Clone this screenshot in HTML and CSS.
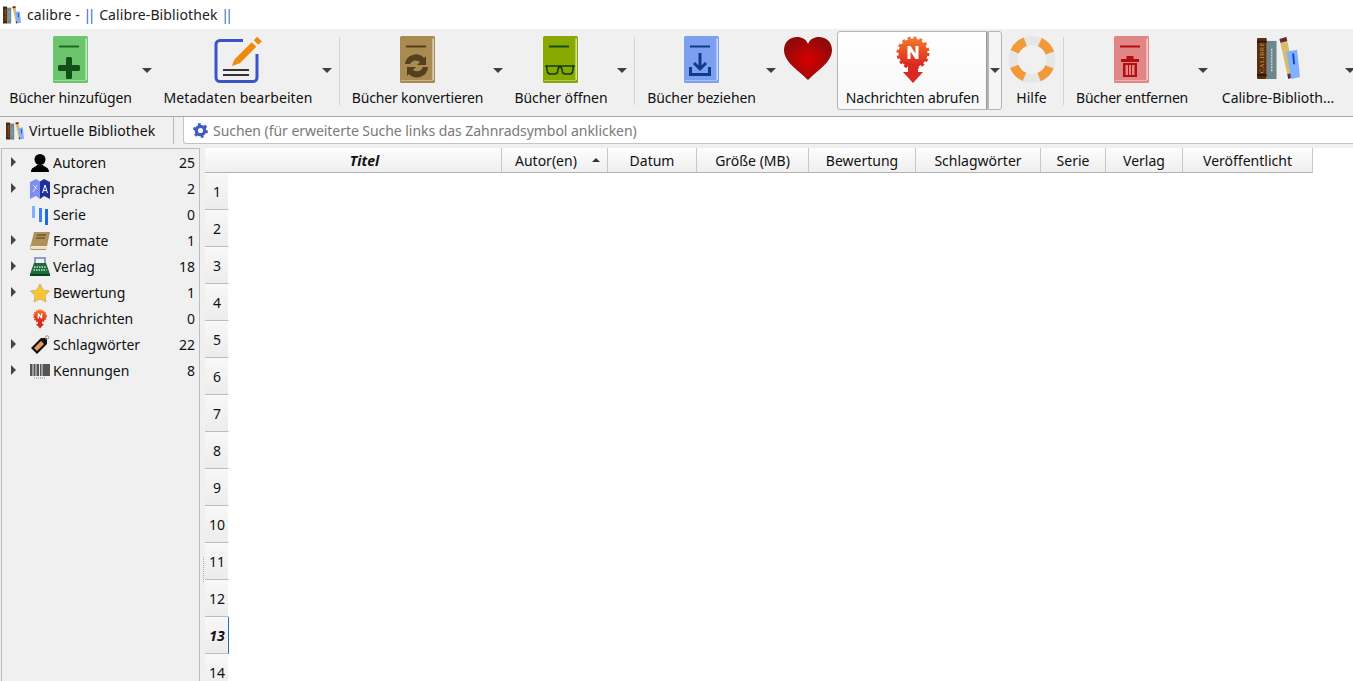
FILE: index.html
```html
<!DOCTYPE html>
<html lang="de">
<head>
<meta charset="utf-8">
<title>calibre</title>
<link rel="stylesheet" href="styles.css">
</head>
<body>
<svg class="defs" width="0" height="0" aria-hidden="true">
  <defs>
    <symbol id="book" viewBox="0 0 35 47">
      <rect x="0" y="0" width="35" height="47" rx="1.5" fill="var(--c)"/>
      <path d="M32.500 2.500H33.800V44H32.500Z" fill="#fff" opacity=".75"/>
      <path d="M1 44.500H33" stroke="#fff" stroke-width="1" opacity=".35"/>
      <rect x="6" y="9.500" width="20" height="2" fill="var(--d)"/>
    </symbol>
    <symbol id="shelf" viewBox="0 0 44 44">
      <rect x="0" y="1" width="10" height="42" rx="1" fill="#5b2e12"/>
      <rect x="0" y="4" width="10" height="2" fill="#2f1507"/>
      <rect x="0" y="38" width="10" height="2" fill="#2f1507"/>
      <text class="spine" transform="translate(7.500 37) rotate(-90)">CALIBRE</text>
      <rect x="10" y="4" width="10" height="39" fill="#6d878b"/>
      <path d="M15 12V36" stroke="#c9d4d6" stroke-width="1.500" stroke-dasharray="2 1"/>
      <path d="M23 2 30 0 39 40 32 43Z" fill="#d9bb6e"/>
      <path d="M23 2 30 0 31 4 24 6ZM31 38 38 36 39 40 32 43Z" fill="#5e2b3a"/>
      <path d="M30 15 41 13 44 41 35 43Z" fill="#7fb1ff"/>
      <path d="M36 17 38 17 39 28 37 28Z" fill="#1f3fc4"/>
    </symbol>
    <linearGradient id="ng" x1="0" y1="0" x2="0" y2="1">
      <stop offset="0" stop-color="#f0782a"/>
      <stop offset="1" stop-color="#d92020"/>
    </linearGradient>
    <symbol id="newsbadge" viewBox="0 0 36 48">
      <circle cx="18" cy="17" r="15" fill="none" stroke="url(#ng)" stroke-width="3" stroke-dasharray="3 2.900"/>
      <circle cx="18" cy="17" r="14.500" fill="url(#ng)"/>
      <path d="M13 28H23V36H28L18 47 8 36H13Z" fill="#d92a22"/>
    </symbol>
  </defs>
</svg>

<header class="titlebar">
  <svg class="win-icon" viewBox="0 0 44 44"><use href="#shelf"/></svg>
  <span>calibre - <b class="pipe">||</b> Calibre-Bibliothek <b class="pipe">||</b></span>
</header>

<nav class="toolbar">
  <div class="tool tool-add">
    <div class="main">
      <svg class="icon-book ic-green" viewBox="0 0 35 47"><use href="#book"/><path d="M13 22.500a1.500 1.500 0 0 1 1.500-1.500h3a1.500 1.500 0 0 1 1.500 1.500V29h6.500a1.500 1.500 0 0 1 1.500 1.500v3a1.500 1.500 0 0 1-1.500 1.500H19v6.500a1.500 1.500 0 0 1-1.500 1.500h-3a1.500 1.500 0 0 1-1.500-1.500V35H6.500a1.500 1.500 0 0 1-1.500-1.500v-3A1.500 1.500 0 0 1 6.500 29H13Z" fill="#12501a"/></svg>
      <span class="label">Bücher hinzufügen</span>
    </div>
    <i class="arrow"></i>
  </div>
  <div class="tool tool-meta">
    <div class="main">
      <svg class="icon-wide" viewBox="0 0 48 47">
        <path d="M29 4.500H6a4 4 0 0 0-4 4v33a4 4 0 0 0 4 4h33a4 4 0 0 0 4-4V18" fill="none" stroke="#3c55c6" stroke-width="3"/>
        <path d="M18 30 20.500 23 25 27.500Z" fill="#ef8a0c"/>
        <path d="M23 25.500 40 8.500M42 6.500 45.500 3" fill="none" stroke="#ef8a0c" stroke-width="6.500"/>
        <path d="M9 34H35M9 39H35" stroke="#333" stroke-width="1.800"/>
      </svg>
      <span class="label">Metadaten bearbeiten</span>
    </div>
    <i class="arrow"></i>
  </div>
  <i class="sep sep-a"></i>
  <div class="tool tool-conv">
    <div class="main">
      <svg class="icon-book ic-brown" viewBox="0 0 35 47"><use href="#book"/>
        <path d="M5 28a11 11 0 0 1 19-6l2-2v9h-9l3-3a6.500 6.500 0 0 0-10 2ZM28 31a11 11 0 0 1-19 7l-2 2v-9h9l-3 3a6.500 6.500 0 0 0 10-3Z" fill="#54401f"/>
      </svg>
      <span class="label">Bücher konvertieren</span>
    </div>
    <i class="arrow"></i>
  </div>
  <div class="tool tool-open">
    <div class="main">
      <svg class="icon-book ic-olive" viewBox="0 0 35 47"><use href="#book"/>
        <path d="M2 30H32M3.500 30 4.500 36Q5 38 8 38H11Q14 38 14.500 36L15.500 31.500H18.500L19.500 36Q20 38 23 38H26Q29 38 29.500 36L30.500 30" fill="none" stroke="#173b12" stroke-width="1.600"/>
      </svg>
      <span class="label">Bücher öffnen</span>
    </div>
    <i class="arrow"></i>
  </div>
  <i class="sep sep-b"></i>
  <div class="tool tool-get">
    <div class="main">
      <svg class="icon-book ic-blue" viewBox="0 0 35 47"><use href="#book"/>
        <path d="M16 17V33M10 27l6 6 6-6" fill="none" stroke="#0f3b8c" stroke-width="3"/>
        <path d="M6.500 31V38.500H25.500V31" fill="none" stroke="#0f3b8c" stroke-width="3"/>
      </svg>
      <span class="label">Bücher beziehen</span>
    </div>
    <i class="arrow"></i>
  </div>
  <div class="tool tool-heart">
    <div class="main">
      <svg class="icon-heart" viewBox="0 0 48 44">
        <defs>
          <radialGradient id="hg" cx="50%" cy="55%" r="55%">
            <stop offset="0" stop-color="#d80000"/>
            <stop offset="1" stop-color="#8f0a0a"/>
          </radialGradient>
        </defs>
        <path d="M24 43C14 33 0 25 0 13 0 5 6 0 13 0c5 0 9 2 11 7 2-5 6-7 11-7 7 0 13 5 13 13 0 12-14 20-24 30Z" fill="url(#hg)"/>
      </svg>
    </div>
  </div>
  <div class="tool tool-news">
    <div class="main news-box">
      <svg class="icon-news" viewBox="0 0 36 48"><use href="#newsbadge"/><path d="M12.500 23V10H15.500L20.500 17.500V10H23.500V23H20.500L15.500 15.500V23Z" fill="#fff"/></svg>
      <span class="label">Nachrichten abrufen</span>
    </div>
    <div class="news-arrow"><i class="arrow"></i></div>
  </div>
  <div class="tool tool-help">
    <div class="main">
      <svg class="icon-wide" viewBox="0 0 48 47">
        <circle cx="24" cy="23.500" r="19" fill="none" stroke="#e6e6e6" stroke-width="9"/>
        <circle cx="24" cy="23.500" r="19" fill="none" stroke="#f29a3a" stroke-width="9" stroke-dasharray="14.900 14.940" stroke-dashoffset="22.300"/>
      </svg>
      <span class="label">Hilfe</span>
    </div>
  </div>
  <i class="sep sep-c"></i>
  <div class="tool tool-del">
    <div class="main">
      <svg class="icon-book ic-red" viewBox="0 0 35 47"><use href="#book"/>
        <path d="M7 23H25V26H7ZM12.500 20H19.500V23H12.500ZM9 27H23V41H9ZM11.500 29V39H14V29ZM15 29V39H17V29ZM18 29V39H20.500V29Z" fill="#b30d0d" fill-rule="evenodd"/>
      </svg>
      <span class="label">Bücher entfernen</span>
    </div>
    <i class="arrow"></i>
  </div>
  <div class="tool tool-lib">
    <div class="main">
      <svg class="icon-shelf" viewBox="0 0 44 44"><use href="#shelf"/></svg>
      <span class="label">Calibre-Biblioth...</span>
    </div>
    <i class="arrow"></i>
  </div>
</nav>

<section class="searchbar">
  <div class="vlib">
    <svg class="vlib-icon" viewBox="0 0 44 44"><use href="#shelf"/></svg>
    <span>Virtuelle Bibliothek</span>
  </div>
  <i class="search-sep"></i>
  <div class="search">
    <svg class="gear" viewBox="0 0 16 16">
      <circle cx="8" cy="8" r="4.500" fill="none" stroke="#3f5bc4" stroke-width="3.500"/>
      <circle cx="8" cy="8" r="6.500" fill="none" stroke="#3f5bc4" stroke-width="3" stroke-dasharray="2.800 4"/>
    </svg>
    <span>Suchen (für erweiterte Suche links das Zahnradsymbol anklicken)</span>
  </div>
</section>

<main class="content">
  <aside class="tags">
    <div class="tag"><i class="tri"></i>
      <svg class="tag-icon" viewBox="0 0 20 20"><circle cx="10" cy="6.500" r="5.500" fill="#000"/><path d="M1 19c0-5 5-5 6-7h6c1 2 6 2 6 7Z" fill="#000"/></svg>
      <span class="tag-name">Autoren</span><span class="tag-count">25</span></div>
    <div class="tag"><i class="tri"></i>
      <svg class="tag-icon" viewBox="0 0 20 20"><path d="M0 3 6 0 10 2.500V20L6 17 0 20Z" fill="#7f8ff0"/><path d="M10 2.500 14 0 20 3V20L14 17 10 20Z" fill="#1f2f9c"/><path d="M12.500 14 15 6 17.500 14M13.500 11.500H16.500" stroke="#fff" fill="none"/><path d="M3 6 7 10M7 6 3 13" stroke="#fff" fill="none" opacity=".7"/></svg>
      <span class="tag-name">Sprachen</span><span class="tag-count">2</span></div>
    <div class="tag"><i class="tri tri-none"></i>
      <svg class="tag-icon" viewBox="0 0 20 20"><rect x="2" y="1" width="3" height="12" fill="#7fb1ff"/><rect x="9" y="3" width="3" height="14" fill="#3a80ee"/><rect x="15" y="4" width="3" height="16" fill="#1a6ae0"/></svg>
      <span class="tag-name">Serie</span><span class="tag-count">0</span></div>
    <div class="tag"><i class="tri"></i>
      <svg class="tag-icon" viewBox="0 0 20 20"><path d="M4 1H20L17 15H2C0 15 0 18 2 18H16V19H2C-1 19 0 15 1 13Z" fill="#b0915a"/><path d="M2 15.500H16.500V18H2Z" fill="#eadfc8"/><path d="M7 4H16M6 7H15" stroke="#6e5a35" stroke-width="1.300"/></svg>
      <span class="tag-name">Formate</span><span class="tag-count">1</span></div>
    <div class="tag"><i class="tri"></i>
      <svg class="tag-icon" viewBox="0 0 20 20"><path d="M5 6V1H15V6" fill="none" stroke="#6b7fc0" stroke-width="1.500"/><path d="M4 6H16L20 17H0Z" fill="#1c6b3a"/><path d="M0 17H20V19H0Z" fill="#123f24"/><path d="M4 10H16M3.500 13H16.500" stroke="#cfe8d8" stroke-width="1.300" stroke-dasharray="1.500 1"/></svg>
      <span class="tag-name">Verlag</span><span class="tag-count">18</span></div>
    <div class="tag"><i class="tri"></i>
      <svg class="tag-icon" viewBox="0 0 20 20"><path d="M10 1 13 7 19.500 8 15 12.500 16 19 10 16 4 19 5 12.500 .5 8 7 7Z" fill="#f7c52c" stroke="#c9a86a" stroke-width=".8" stroke-linejoin="round"/></svg>
      <span class="tag-name">Bewertung</span><span class="tag-count">1</span></div>
    <div class="tag"><i class="tri tri-none"></i>
      <svg class="tag-icon" viewBox="0 0 36 48"><use href="#newsbadge"/><path d="M12.500 23V10H15.500L20.500 17.500V10H23.500V23H20.500L15.500 15.500V23Z" fill="#fff"/></svg>
      <span class="tag-name">Nachrichten</span><span class="tag-count">0</span></div>
    <div class="tag"><i class="tri"></i>
      <svg class="tag-icon" viewBox="0 0 20 20"><path d="M1 13 11 3 17 3 17 9 7 19Z" fill="#111"/><path d="M4 13 11 6 14 9 7 16Z" fill="#e99a5a"/><circle cx="17" cy="2.500" r="1.800" fill="none" stroke="#999"/></svg>
      <span class="tag-name">Schlagwörter</span><span class="tag-count">22</span></div>
    <div class="tag"><i class="tri"></i>
      <svg class="tag-icon" viewBox="0 0 20 20"><rect x="0" y="3" width="20" height="12" fill="#555"/><path d="M3 3V15M6 3V15M9.500 3V15M12 3V15" stroke="#e6e6e6"/><path d="M4 17H16" stroke="#888" stroke-dasharray="1 1"/></svg>
      <span class="tag-name">Kennungen</span><span class="tag-count">8</span></div>
  </aside>

  <div class="splitter"><i class="grip"></i></div>

  <div class="table">
    <div class="thead">
      <div class="corner"></div>
      <div class="th th-title">Titel</div>
      <div class="th th-author">Autor(en)<i class="sort"></i></div>
      <div class="th th-date">Datum</div>
      <div class="th th-size">Größe (MB)</div>
      <div class="th th-rating">Bewertung</div>
      <div class="th th-tags">Schlagwörter</div>
      <div class="th th-series">Serie</div>
      <div class="th th-pub">Verlag</div>
      <div class="th th-published">Veröffentlicht</div>
    </div>
    <div class="rows">
      <div class="rownum">1</div>
      <div class="rownum">2</div>
      <div class="rownum">3</div>
      <div class="rownum">4</div>
      <div class="rownum">5</div>
      <div class="rownum">6</div>
      <div class="rownum">7</div>
      <div class="rownum">8</div>
      <div class="rownum">9</div>
      <div class="rownum">10</div>
      <div class="rownum">11</div>
      <div class="rownum">12</div>
      <div class="rownum current">13</div>
      <div class="rownum">14</div>
    </div>
  </div>
</main>
</body>
</html>
```

FILE: styles.css
```css
* { box-sizing: border-box; }
html, body { margin: 0; padding: 0; height: 100%; overflow: hidden; }
body {
  width: 1353px;
  height: 681px;
  background: #f0f0f0;
  color: #111;
  font-family: "Noto Sans", "Open Sans", sans-serif;
  font-size: 14px;
  line-height: 20px;
}
i { display: block; font-style: normal; }
.defs { position: absolute; }
.spine { font-size: 7px; letter-spacing: .3px; fill: #c99a3a; font-family: "Liberation Serif", serif; }

.titlebar {
  height: 29px;
  background: #fff;
  display: flex;
  align-items: center;
  padding-left: 3px;
  gap: 6px;
  color: #222;
  letter-spacing: .1px;
}
.win-icon { width: 18px; height: 18px; }
.pipe { font-weight: 400; color: #2a6fb8; letter-spacing: -3.6px; margin-right: 3.6px; }

.toolbar {
  height: 88px;
  padding-top: 2px;
  display: flex;
  border-bottom: 1px solid #a8a8a8;
  overflow: hidden;
}
.tool { display: flex; flex: none; height: 79px; }
.main {
  flex: none;
  display: flex;
  flex-direction: column;
  align-items: center;
  padding-top: 5px;
}
.label { margin-top: 5px; white-space: nowrap; height: 20px; }
.icon-book { width: 35px; height: 47px; display: block; }
.tool-conv .icon-book, .tool-open .icon-book, .tool-get .icon-book, .tool-del .icon-book { margin-right: 1px; }
.icon-wide { width: 48px; height: 47px; display: block; }
.icon-shelf { width: 43px; height: 43px; margin: 1px 0 3px; display: block; }
.icon-heart { width: 48px; height: 44px; margin-top: 1px; display: block; }
.icon-news { width: 36px; height: 48px; display: block; }
.arrow {
  flex: none;
  width: 10px;
  height: 5px;
  margin: 37px 1px 0;
  border-left: 5px solid transparent;
  border-right: 5px solid transparent;
  border-top: 5px solid #404040;
}
.ic-green { --c: #6cc56c; --d: #1e6a22; }
.ic-brown { --c: #a98a50; --d: #54401f; }
.ic-olive { --c: #88aa00; --d: #174a22; }
.ic-blue { --c: #7c9ff0; --d: #0f3b8c; }
.ic-red { --c: #e08686; --d: #b30d0d; }

.sep { flex: none; width: 1px; height: 68px; margin-top: 6px; background: #d4d4d4; }
.sep-a { margin-left: 6px; }
.sep-b { margin-left: 6px; }
.sep-c { margin-left: 8px; }

.tool-add .main { width: 141px; }
.tool-add .label { letter-spacing: -.17px; }
.tool-meta { margin-left: 2px; }
.tool-meta .main { width: 166px; }
.tool-meta .label { letter-spacing: .1px; }
.tool-conv { margin-left: 3px; }
.tool-conv .main { width: 149px; }
.tool-conv .label { letter-spacing: -.16px; }
.tool-open { margin-left: 2px; }
.tool-open .main { width: 110px; }
.tool-open .label { letter-spacing: -.05px; }
.tool-get { margin-left: 3px; }
.tool-get .main { width: 127px; }
.tool-get .label { letter-spacing: -.1px; }
.tool-heart { margin-left: 7px; }
.tool-heart .main { width: 48px; }
.tool-news { margin-left: 5px; }
.news-box {
  width: 151px;
  padding-top: 4px;
  background: linear-gradient(#fff, #f7f7f7);
  border: 1px solid #b4b4b4;
  border-radius: 3px 0 0 3px;
  box-shadow: inset -1px 0 0 #999;
}
.news-box .label { margin-top: 4px; letter-spacing: -.14px; }
.news-arrow {
  flex: none;
  width: 14px;
  background: #f5f5f5;
  border: 1px solid #b4b4b4;
  border-radius: 0 3px 3px 0;
}
.news-arrow .arrow { margin: 36px 1px 0; }
.tool-help { margin-left: 6px; }
.tool-help .main { width: 47px; }
.tool-del { margin-left: 3px; }
.tool-del .main { width: 130px; }
.tool-del .label { letter-spacing: -.24px; }
.tool-lib { margin-left: 3px; }
.tool-lib .main { width: 132px; }

.searchbar { height: 27px; display: flex; align-items: stretch; }
.vlib { display: flex; align-items: center; gap: 5px; padding-left: 6px; width: 173px; letter-spacing: .1px; }
.vlib span { padding-top: 1px; }
.vlib-icon { width: 18px; height: 18px; }
.search-sep { width: 1px; background: #b8b8b8; }
.search {
  margin-left: 9px;
  flex: 1;
  display: flex;
  align-items: center;
  gap: 5px;
  padding-left: 9px;
  background: #fff;
  border: 1px solid #c4c4c4;
  border-top: 0;
  border-right: 0;
  border-radius: 0 0 0 3px;
  color: #7a7a7a;
  letter-spacing: -.05px;
}
.search span { padding-top: 1px; }
.gear { width: 15px; height: 15px; }

.content {
  height: 537px;
  padding: 4px 0 0 1px;
  display: flex;
}
.tags {
  flex: none;
  width: 199px;
  border: 1px solid #bdbdbd;
  border-bottom: 0;
  padding-top: 1px;
}
.tag { height: 26px; display: flex; align-items: center; padding-right: 4px; }
.tri {
  flex: none;
  width: 5px;
  height: 10px;
  margin-left: 9px;
  margin-top: -3px;
  border-left: 5px solid #444;
  border-top: 5px solid transparent;
  border-bottom: 5px solid transparent;
}
.tri-none { border-color: transparent; }
.tag-icon { flex: none; width: 20px; height: 20px; margin-left: 14px; }
.tag-name { margin-left: 3px; flex: 1; }

.splitter { flex: none; width: 5px; display: flex; align-items: flex-start; justify-content: center; }
.grip { width: 1px; height: 25px; margin-top: 409px; border-left: 1px dotted #aaa; margin-left: 1px; }

.table { flex: 1; background: #fff; min-width: 0; }
.thead { height: 25px; display: flex; }
.corner, .th { background: linear-gradient(#fdfdfd, #efefef); border-bottom: 1px solid #b4b4b4; }
.corner { flex: none; width: 23px; }
.th {
  flex: none;
  display: flex;
  align-items: center;
  justify-content: center;
  border-right: 1px solid #c8c8c8;
  white-space: nowrap;
  padding-top: 1px;
}
.th-title { width: 274px; font-weight: 700; font-style: italic; }
.th-author { width: 106px; justify-content: flex-start; padding-left: 13px; }
.sort {
  margin-left: 15px;
  margin-top: -2px;
  width: 8px;
  height: 4px;
  border-left: 4px solid transparent;
  border-right: 4px solid transparent;
  border-bottom: 4px solid #333;
}
.th-date { width: 89px; }
.th-size { width: 112px; }
.th-rating { width: 107px; }
.th-tags { width: 125px; }
.th-series { width: 65px; }
.th-pub { width: 77px; }
.th-published { width: 130px; }

.rows { width: 24px; }
.rownum {
  height: 37px;
  display: flex;
  align-items: center;
  justify-content: center;
  padding: 2px 0 0 1px;
  background: linear-gradient(#f8f8f8, #ececec);
  border-bottom: 1px solid #bdbdbd;
  border-right: 1px solid #fff;
}
.rownum.current {
  font-weight: 700;
  font-style: italic;
  border-right: 1px solid #2a6fb8;
}
```
